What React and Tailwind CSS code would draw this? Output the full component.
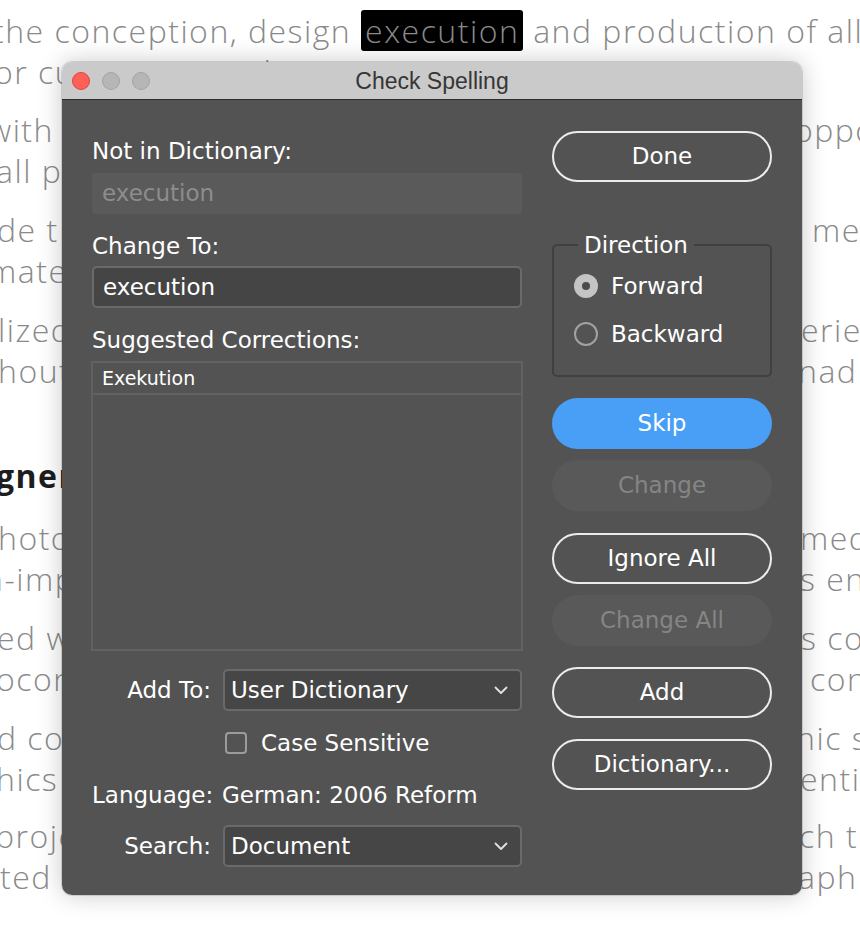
import React from "react";

const bgFont = { fontFamily: '"Open Sans", "Noto Sans", sans-serif' };

function BgLine({ left, right, leftShift = "ml-0", rightShift = "ml-0", bold = false }) {
  return (
    <div className={`flex h-[41px] items-center justify-between whitespace-nowrap text-[32px] leading-[41px] tracking-[1.5px] ${bold ? "font-bold text-[#1d1d1d]" : "font-light text-[#8a8a8a]"}`}>
      <span className={leftShift}>{left}</span>
      <span className="block w-[58px] overflow-hidden">
        <span className={`block ${rightShift}`}>{right}</span>
      </span>
    </div>
  );
}

function PillButton({ children, variant = "outline", className = "" }) {
  const styles = {
    outline: "border-2 border-[#ececec] text-white",
    primary: "bg-[#489ff5] text-white",
    disabled: "bg-[#595959] text-[#858585]",
  };
  return (
    <div className={`flex h-[51px] w-[220px] items-center justify-center rounded-full text-[23px] ${styles[variant]} ${className}`}>
      {children}
    </div>
  );
}

function Chevron() {
  return (
    <svg width="14" height="9" viewBox="0 0 14 9" fill="none">
      <polyline points="1.5,1.5 7,7 12.5,1.5" stroke="#e2e2e2" strokeWidth="1.8" strokeLinecap="round" strokeLinejoin="round" />
    </svg>
  );
}

function Select({ value }) {
  return (
    <div className="flex h-[42px] items-center justify-between rounded-[5px] border-2 border-[#6a6a6a] bg-[#464646] pl-[6px] pr-[12px] text-[23px] text-white">
      <span>{value}</span>
      <Chevron />
    </div>
  );
}

export default function App() {
  return (
    <div className="relative h-[926px] w-[860px] overflow-hidden bg-white" style={bgFont}>
      {/* background document */}
      <div className="flex flex-col pt-[10px]">
        <div className="flex h-[41px] items-center whitespace-nowrap text-[32px] font-light leading-[41px] tracking-[1.5px] text-[#8a8a8a]">
          <span className="-ml-[7px]">the conception, design&nbsp;</span>
          <span className="rounded-[3px] bg-black px-[4px] leading-[41px]">execution</span>
          <span>&nbsp;and production of all</span>
        </div>
        <div className="h-[41px] whitespace-nowrap text-[32px] font-light leading-[41px] tracking-[1.5px] text-[#8a8a8a]">
          <span className="-ml-[6px]">or customers and competition participants.</span>
        </div>

        <div className="mt-[17px]">
          <BgLine left="with" right="oppo" leftShift="-ml-[12px]" rightShift="-ml-[8px]" />
          <BgLine left="all pr" right="" leftShift="-ml-[4px]" />
        </div>
        <div className="mt-[18px]">
          <BgLine left="de t" right="me" leftShift="-ml-[3px]" rightShift="ml-[10px]" />
          <BgLine left="mate" right="" leftShift="-ml-[12px]" />
        </div>
        <div className="mt-[18px]">
          <BgLine left="lized" right="erie" leftShift="-ml-[2px]" rightShift="-ml-[1px]" />
          <BgLine left="hout" right="nad" leftShift="-ml-[2px]" rightShift="-ml-[4px]" />
        </div>
        <div className="mt-[64px]">
          <BgLine left="gner" right="" bold leftShift="-ml-[4px]" />
        </div>
        <div className="mt-[21px]">
          <BgLine left="hoto" right="med" leftShift="-ml-[2px]" rightShift="-ml-[2px]" />
          <BgLine left="n-imp" right="s en" leftShift="-ml-[16px]" rightShift="-ml-[2px]" />
        </div>
        <div className="mt-[18px]">
          <BgLine left="ed w" right="s co" leftShift="-ml-[3px]" rightShift="-ml-[1px]" />
          <BgLine left="ocon" right="con" leftShift="-ml-[4px]" rightShift="ml-[8px]" />
        </div>
        <div className="mt-[18px]">
          <BgLine left="d co" right="nic s" leftShift="-ml-[3px]" rightShift="-ml-[6px]" />
          <BgLine left="hics" right="entia" leftShift="-ml-[4px]" rightShift="-ml-[2px]" />
        </div>
        <div className="mt-[16px]">
          <BgLine left="proje" right="ch t" leftShift="-ml-[5px]" rightShift="-ml-[3px]" />
          <BgLine left="ted" right="aph" leftShift="ml-[0px]" rightShift="-ml-[4px]" />
        </div>
      </div>

      {/* dialog window */}
      <div
        className="absolute left-[62px] top-[62px] flex h-[833px] w-[740px] flex-col overflow-hidden rounded-[10px] shadow-[0_0_24px_rgba(0,0,0,0.22),0_0_0_1px_rgba(0,0,0,0.12)]"
        style={{ fontFamily: '"DejaVu Sans", "Noto Sans", sans-serif' }}
      >
        {/* title bar */}
        <div className="grid h-[38px] grid-cols-[1fr_auto_1fr] items-center border-b border-[#2e2e2e] bg-[#cacaca]">
          <div className="flex items-center gap-[12px] pl-[10px]">
            <span className="h-[18px] w-[18px] rounded-full border border-[#e0443e] bg-[#fe5f57]" />
            <span className="h-[18px] w-[18px] rounded-full border border-[#a4a4a4] bg-[#b6b6b6]" />
            <span className="h-[18px] w-[18px] rounded-full border border-[#a4a4a4] bg-[#b6b6b6]" />
          </div>
          <div className="text-[23px] leading-[28px] text-[#363636]" style={{ fontFamily: '"Liberation Sans", "Noto Sans", sans-serif' }}>
            Check Spelling
          </div>
          <div />
        </div>

        {/* body */}
        <div className="flex flex-1 gap-[30px] bg-[#535353] px-[30px] text-white">
          {/* left column */}
          <div className="flex w-[430px] flex-col pt-[37px]">
            <div className="h-[28px] text-[23px] leading-[28px]">Not in Dictionary:</div>
            <div className="mt-[8px] flex h-[41px] items-center rounded-[4px] bg-[#5a5a5a] pl-[10px] text-[23px] text-[#8d8d8d]">
              execution
            </div>
            <div className="mt-[18px] h-[28px] text-[23px] leading-[28px]">Change To:</div>
            <div className="mt-[6px] flex h-[42px] items-center rounded-[5px] border-2 border-[#6a6a6a] bg-[#454545] pl-[9px] text-[23px]">
              execution
            </div>
            <div className="mt-[18px] h-[28px] text-[23px] leading-[28px]">Suggested Corrections:</div>
            <div className="-mx-[1px] mt-[7px] h-[290px] border-2 border-[#616161]">
              <div className="flex h-[32px] items-center border-b-2 border-[#616161] pl-[9px] text-[19px]">Exekution</div>
            </div>

            <div className="mt-[18px] grid grid-cols-[119px_1fr] items-center gap-x-[12px]">
              <div className="whitespace-nowrap text-right text-[23px]">Add To:</div>
              <Select value="User Dictionary" />
            </div>
            <div className="mt-[18px] grid h-[22px] grid-cols-[119px_1fr] items-center gap-x-[12px]">
              <div />
              <div className="flex items-center gap-[14px] pl-[2px]">
                <span className="h-[22px] w-[22px] rounded-[4px] border-2 border-[#9c9c9c]" />
                <span className="text-[23px] leading-[28px]">Case Sensitive</span>
              </div>
            </div>
            <div className="mt-[30px] grid h-[28px] grid-cols-[119px_1fr] items-center gap-x-[12px]">
              <div className="whitespace-nowrap text-right text-[23px] leading-[28px]">Language:</div>
              <div className="-ml-[1px] text-[23px] leading-[28px]">German: 2006 Reform</div>
            </div>
            <div className="mt-[16px] grid grid-cols-[119px_1fr] items-center gap-x-[12px]">
              <div className="whitespace-nowrap text-right text-[23px]">Search:</div>
              <Select value="Document" />
            </div>
          </div>

          {/* right column */}
          <div className="flex w-[220px] flex-col pt-[31px]">
            <PillButton>Done</PillButton>
            <fieldset className="mt-[49px] h-[146px] rounded-[5px] border-2 border-[#404040] pl-[20px] pr-[8px]">
              <legend className="ml-[4px] px-[6px] text-[23px] leading-[28px]">Direction</legend>
              <div className="mt-[13px] flex h-[28px] items-center gap-[13px]">
                <span className="flex h-[24px] w-[24px] items-center justify-center rounded-full bg-[#c4c4c4]">
                  <span className="h-[8px] w-[8px] rounded-full bg-[#4b4b4b]" />
                </span>
                <span className="text-[23px]">Forward</span>
              </div>
              <div className="mt-[20px] flex h-[28px] items-center gap-[13px]">
                <span className="h-[24px] w-[24px] rounded-full border-2 border-[#a2a2a2]" />
                <span className="text-[23px]">Backward</span>
              </div>
            </fieldset>
            <PillButton variant="primary" className="mt-[21px]">Skip</PillButton>
            <PillButton variant="disabled" className="mt-[11px]">Change</PillButton>
            <PillButton className="mt-[22px]">Ignore All</PillButton>
            <PillButton variant="disabled" className="mt-[11px]">Change All</PillButton>
            <PillButton className="mt-[21px]">Add</PillButton>
            <PillButton className="mt-[21px]">Dictionary...</PillButton>
          </div>
        </div>
      </div>
    </div>
  );
}
